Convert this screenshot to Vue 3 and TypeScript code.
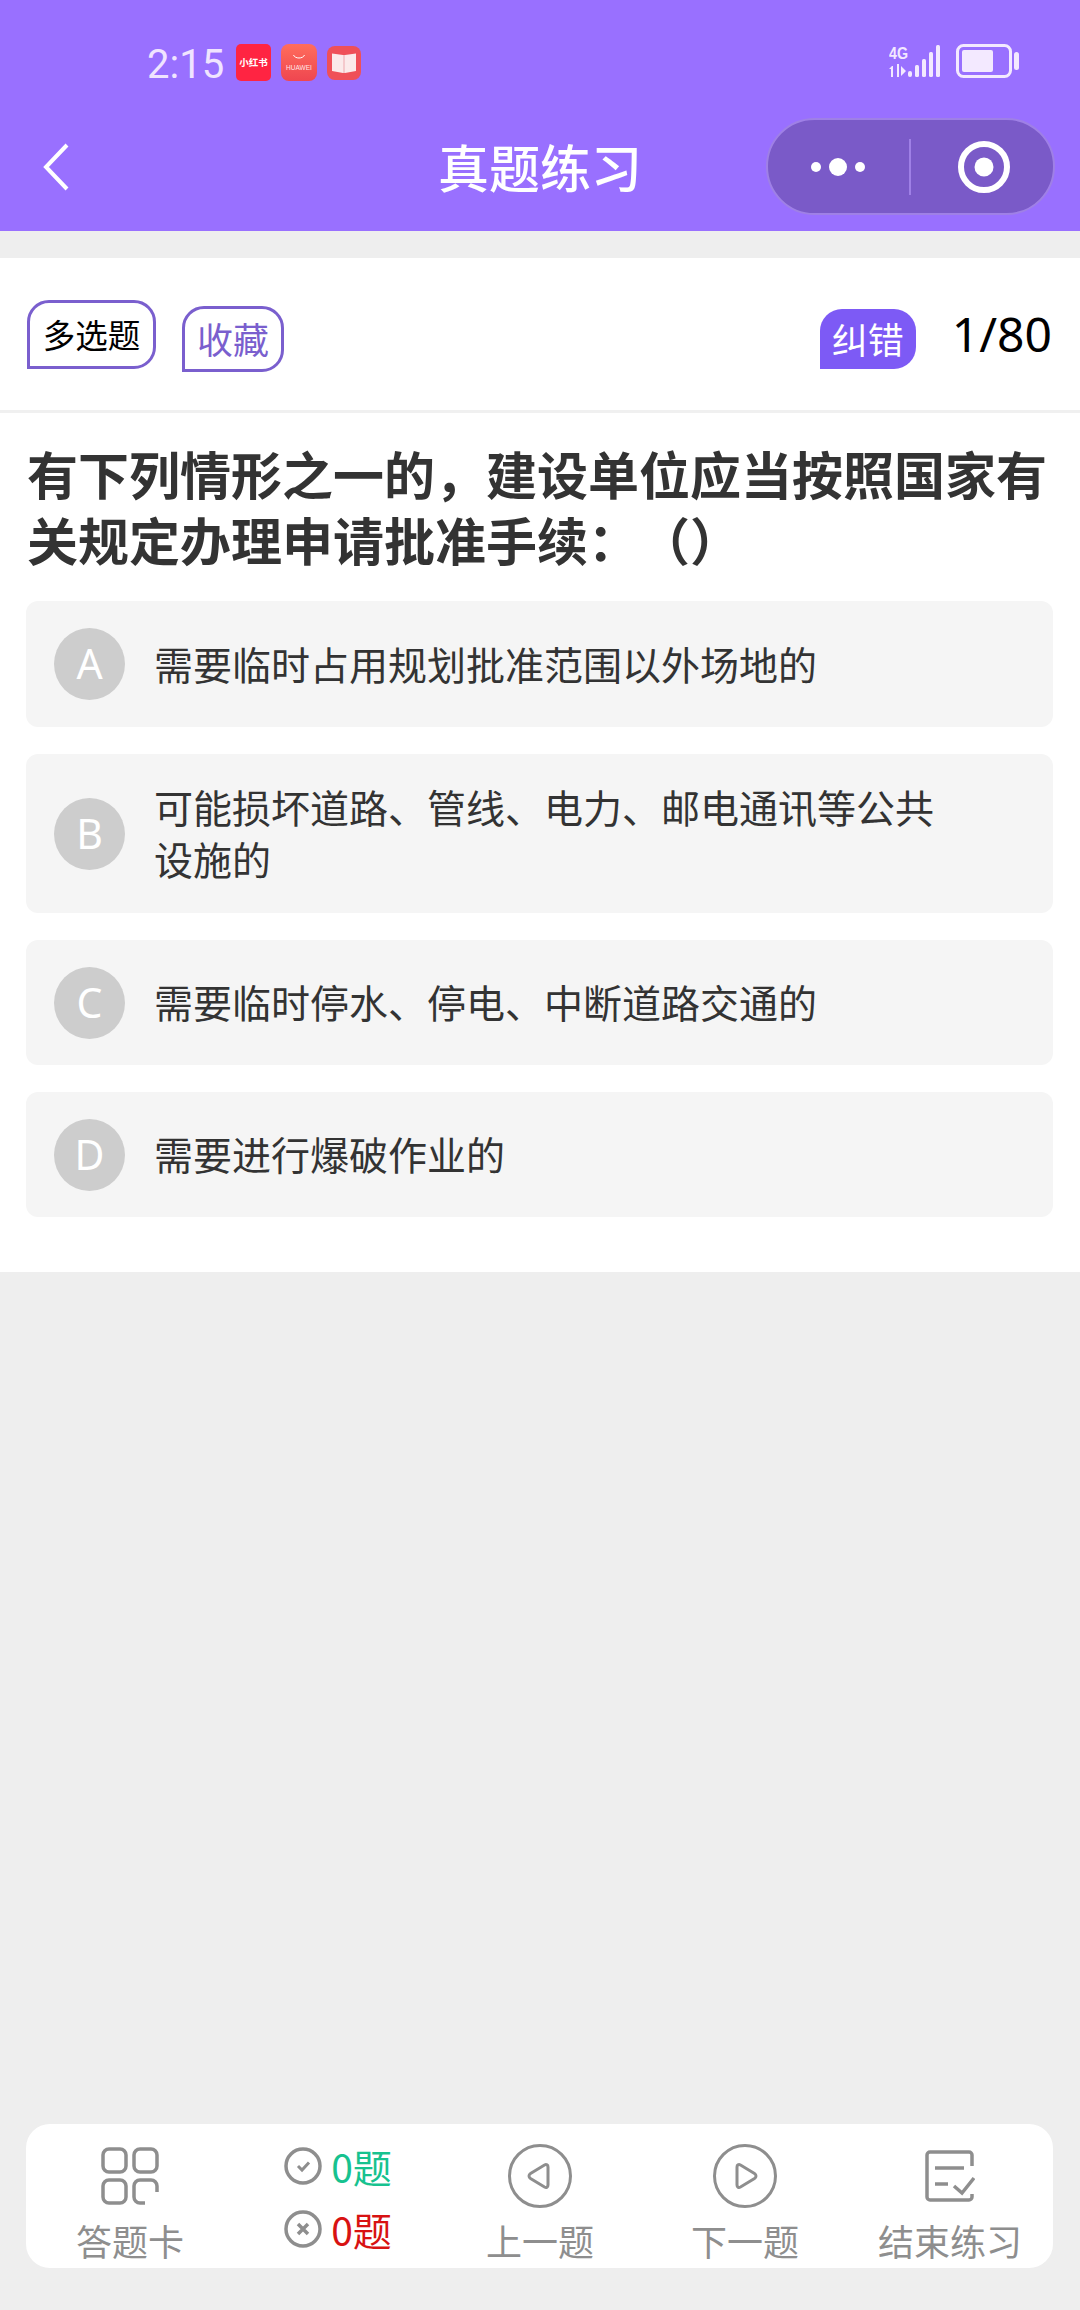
<template>
  <div class="page">
    <header class="head">
      <div class="status">
        <span class="time">2:15</span>
        <span class="app red-book">小红书</span>
        <span class="app huawei">
          <svg width="14" height="7" viewBox="0 0 14 7"><path d="M1.500 1c1.500 4 9.500 4 11 0" fill="none" stroke="#fff" stroke-width="1" /></svg>
          <span class="huawei-name">HUAWEI</span>
        </span>
        <span class="app book">
          <svg width="26" height="24" viewBox="0 0 26 24">
            <path d="M1 2.500l11 1.500v18l-11-2z" fill="#fbeaea" />
            <path d="M25 2.500l-11 1.500v18l11-2z" fill="#fbeaea" />
            <path d="M12 4h2v18h-2z" fill="#f4c9cc" />
          </svg>
        </span>
        <span class="spacer"></span>
        <svg class="signal" width="56" height="34" viewBox="0 0 56 34" fill="#f3e9ff">
          <text x="0" y="15" class="net" textLength="19" lengthAdjust="spacingAndGlyphs">4G</text>
          <path d="M3 22l-3 3h2v8h2v-11zM8 20h2v13h-2zM12 22l5 5-5 5z" />
          <rect x="19" y="27" width="4" height="6" rx="2" />
          <rect x="26" y="21" width="4" height="12" rx="1.500" />
          <rect x="33" y="15" width="4" height="18" rx="1.500" />
          <rect x="40" y="8" width="4" height="25" rx="1.500" />
          <rect x="47" y="1" width="4" height="32" rx="1.500" />
        </svg>
        <svg class="battery" width="63" height="34" viewBox="0 0 63 34">
          <rect x="1.500" y="1.500" width="53" height="31" rx="6" fill="none" stroke="#f3e9ff" stroke-width="3" />
          <rect x="6" y="6" width="31" height="22" rx="2" fill="#f3e9ff" />
          <rect x="58" y="8" width="5" height="18" rx="2.500" fill="#f3e9ff" />
        </svg>
      </div>
      <div class="nav">
        <svg class="back" width="30" height="50" viewBox="0 0 30 50">
          <path d="M25 3L4 25l21 22" fill="none" stroke="#fff" stroke-width="4" />
        </svg>
        <h1 class="title">真题练习</h1>
        <div class="capsule">
          <svg class="more" width="58" height="24" viewBox="0 0 58 24" fill="#fff">
            <circle cx="7" cy="12" r="5" />
            <circle cx="29" cy="12" r="9" />
            <circle cx="51" cy="12" r="5" />
          </svg>
          <span class="sep"></span>
          <svg class="target" width="54" height="54" viewBox="0 0 54 54">
            <circle cx="27" cy="27" r="23" fill="none" stroke="#fff" stroke-width="6" />
            <circle cx="27" cy="27" r="9.500" fill="#fff" />
          </svg>
        </div>
      </div>
    </header>

    <main class="card">
      <div class="top">
        <span class="tag kind">多选题</span>
        <span class="tag fav">收藏</span>
        <span class="spacer"></span>
        <span class="report">纠错</span>
        <span class="count">1/80</span>
      </div>
      <div class="body">
        <h2 class="question">有下列情形之一的，建设单位应当按照国家有关规定办理申请批准手续：（）</h2>
        <ul class="options">
          <li v-for="o in options" :key="o.key" class="option">
            <span class="letter">{{ o.key }}</span>
            <span class="option-text">{{ o.text }}</span>
          </li>
        </ul>
      </div>
    </main>

    <footer class="bar">
      <div class="item">
        <span class="icon">
          <svg width="58" height="58" viewBox="0 0 58 58" fill="none" stroke="#8e8e8e" stroke-width="3.500">
            <rect x="2" y="2" width="23" height="23" rx="6" />
            <rect x="33" y="2" width="23" height="23" rx="6" />
            <rect x="2" y="33" width="23" height="23" rx="6" />
            <path d="M44 56h-5a6 6 0 0 1-6-6V39a6 6 0 0 1 6-6h11a6 6 0 0 1 6 6v6" />
          </svg>
        </span>
        <span class="label">答题卡</span>
      </div>
      <div class="stats">
        <div class="stat right">
          <svg width="38" height="38" viewBox="0 0 38 38" fill="none" stroke="#8e8e8e">
            <circle cx="19" cy="19" r="17" stroke-width="3.500" />
            <path d="M14 19l4 4 7-7.500" stroke-width="3" />
          </svg>
          <span>0题</span>
        </div>
        <div class="stat wrong">
          <svg width="38" height="38" viewBox="0 0 38 38" fill="none" stroke="#8e8e8e">
            <circle cx="19" cy="19" r="17" stroke-width="3.500" />
            <path d="M14 14l10 10M24 14l-10 10" stroke-width="3.500" />
          </svg>
          <span>0题</span>
        </div>
      </div>
      <div class="item">
        <span class="icon">
          <svg width="64" height="64" viewBox="0 0 64 64" fill="none" stroke="#8e8e8e" stroke-width="3">
            <circle cx="32" cy="32" r="30.500" />
            <path d="M22.500 29.500l14-8.500c2-1 3.500 0 3.500 2v18c0 2-1.500 3-3.500 2l-14-8.500c-2-1.300-2-3.700 0-5z" />
          </svg>
        </span>
        <span class="label">上一题</span>
      </div>
      <div class="item">
        <span class="icon">
          <svg width="64" height="64" viewBox="0 0 64 64" fill="none" stroke="#8e8e8e" stroke-width="3">
            <circle cx="32" cy="32" r="30.500" />
            <path d="M41.500 29.500l-14-8.500c-2-1-3.500 0-3.500 2v18c0 2 1.500 3 3.500 2l14-8.500c2-1.300 2-3.700 0-5z" />
          </svg>
        </span>
        <span class="label">下一题</span>
      </div>
      <div class="item end">
        <span class="icon">
          <svg width="50" height="52" viewBox="0 0 50 52" fill="none" stroke="#8e8e8e" stroke-width="3.500">
            <path d="M47 16V5a3 3 0 0 0-3-3H5a3 3 0 0 0-3 3v42a3 3 0 0 0 3 3h39a3 3 0 0 0 3-3v-3" />
            <path d="M10 18h29M10 34h13" />
            <path d="M29 36l8 7 12-15" />
          </svg>
        </span>
        <span class="label">结束练习</span>
      </div>
    </footer>
  </div>
</template>

<script setup lang="ts">
type Option = { key: string; text: string }

const options: Option[] = [
  { key: 'A', text: '需要临时占用规划批准范围以外场地的' },
  { key: 'B', text: '可能损坏道路、管线、电力、邮电通讯等公共设施的' },
  { key: 'C', text: '需要临时停水、停电、中断道路交通的' },
  { key: 'D', text: '需要进行爆破作业的' },
]
</script>

<style>
body {
  margin: 0;
  background: #eeeeee;
}
</style>

<style scoped>
.page {
  display: flex;
  flex-direction: column;
  min-height: 2310px;
  background: #eeeeee;
  font-family: "Noto Sans CJK SC", "Noto Sans", sans-serif;
  color: #333;
}
.head {
  height: 231px;
  box-sizing: border-box;
  padding-top: 44px;
  background: #9970ff;
  color: #fff;
}
.status {
  display: flex;
  align-items: flex-start;
  height: 37px;
  padding: 0 61px 0 147px;
}
.time {
  width: 76px;
  margin-top: 1px;
  margin-right: 13px;
  font-family: Roboto, sans-serif;
  font-size: 40px;
  line-height: 40px;
  color: #f0e4ff;
}
.app {
  display: flex;
  flex-direction: column;
  align-items: center;
  justify-content: center;
  box-sizing: border-box;
  width: 35px;
  height: 37px;
  margin-right: 10px;
  border-radius: 5px;
}
.red-book {
  background: #ff2442;
  font-size: 9.500px;
  font-weight: 700;
  line-height: 37px;
  color: #fff;
  white-space: nowrap;
}
.huawei {
  width: 36px;
  background: linear-gradient(#ff6d5c, #ef4650);
  border-radius: 8px;
}
.huawei-name {
  font-family: "Liberation Sans", sans-serif;
  font-size: 6.500px;
  line-height: 9px;
  margin-top: 2px;
  color: #ffe9e6;
}
.book {
  width: 34px;
  height: 34px;
  margin-top: 2px;
  background: #ef5058;
  border-radius: 8px;
}
.spacer {
  flex: 1;
}
.signal {
  margin-right: 11px;
}
.net {
  font-family: "Liberation Sans", sans-serif;
  font-size: 17px;
  font-weight: 700;
}
.nav {
  display: flex;
  align-items: center;
  justify-content: space-between;
  position: relative;
  height: 97px;
  margin-top: 37px;
  padding: 0 25px 0 42px;
}
.title {
  position: absolute;
  left: 0;
  right: 0;
  margin: 0;
  text-align: center;
  font-size: 51px;
  font-weight: 500;
  line-height: 97px;
  color: #fff;
  pointer-events: none;
}
.capsule {
  display: flex;
  align-items: center;
  box-sizing: border-box;
  width: 289px;
  height: 97px;
  padding-left: 41px;
  background: #7a5ac8;
  border: 2px solid #9f80e6;
  border-radius: 49px;
}
.sep {
  width: 2px;
  height: 56px;
  margin-left: 42px;
  background: #9f80e6;
}
.target {
  margin-left: 46px;
}
.card {
  margin-top: 27px;
  background: #fff;
}
.top {
  display: flex;
  align-items: flex-start;
  box-sizing: border-box;
  height: 155px;
  padding: 0 28px 0 27px;
  border-bottom: 3px solid #f0f0f0;
}
.tag {
  display: flex;
  align-items: center;
  justify-content: center;
  box-sizing: border-box;
  padding-bottom: 3px;
  border: 3px solid #7a5fce;
  border-radius: 22px 22px 22px 0;
}
.kind {
  width: 129px;
  height: 69px;
  margin-top: 42px;
  font-size: 32.500px;
  color: #000;
}
.fav {
  width: 102px;
  height: 66px;
  margin-top: 48px;
  margin-left: 26px;
  font-size: 36px;
  color: #7a5fce;
}
.report {
  width: 96px;
  height: 60px;
  margin-top: 51px;
  background: #7d5af5;
  border-radius: 22px 22px 22px 0;
  font-size: 36px;
  line-height: 58px;
  text-align: center;
  color: #fff;
}
.count {
  margin-top: 39px;
  margin-left: 36px;
  font-family: "Noto Sans", sans-serif;
  font-size: 48px;
  line-height: 74px;
  color: #000;
}
.body {
  padding: 27px 27px 55px 27px;
}
.question {
  margin: 0 0 29px;
  font-size: 51px;
  font-weight: 700;
  line-height: 66px;
  color: #333;
  text-spacing-trim: space-all;
}
.options {
  display: flex;
  flex-direction: column;
  gap: 27px;
  margin: 0 0 0 -1px;
  padding: 0;
  list-style: none;
}
.option {
  display: flex;
  align-items: center;
  box-sizing: border-box;
  min-height: 125px;
  padding: 26px 110px 26px 28px;
  background: #f5f5f5;
  border-radius: 12px;
}
.option:first-child {
  min-height: 126px;
}
.letter {
  flex: none;
  width: 71px;
  height: 72px;
  margin-right: 29px;
  border-radius: 50%;
  background: #cdcdcd;
  font-family: "Noto Sans", sans-serif;
  font-size: 41px;
  line-height: 70px;
  text-align: center;
  color: #fff;
}
.option-text {
  padding-bottom: 3px;
  font-size: 39px;
  line-height: 52px;
  color: #333;
}
.bar {
  display: grid;
  grid-template-columns: 208px 208px 196px 214px 1fr;
  box-sizing: border-box;
  height: 144px;
  margin: auto 27px 42px 26px;
  background: #fff;
  border-radius: 24px;
}
.item {
  display: flex;
  flex-direction: column;
  align-items: center;
  padding-top: 19px;
}
.end {
  padding-right: 5px;
}
.icon {
  display: flex;
  align-items: center;
  justify-content: center;
  height: 66px;
  margin-bottom: 9px;
}
.label {
  font-size: 36px;
  line-height: 44px;
  color: #8e8e8e;
  white-space: nowrap;
}
.stats {
  display: flex;
  flex-direction: column;
  align-items: center;
  justify-content: center;
  gap: 15px;
  padding-top: 2px;
}
.stat {
  display: flex;
  align-items: center;
  gap: 9px;
  height: 48px;
  font-size: 39px;
  line-height: 48px;
}
.right {
  color: #17c28f;
}
.wrong {
  color: #d81212;
}
</style>
